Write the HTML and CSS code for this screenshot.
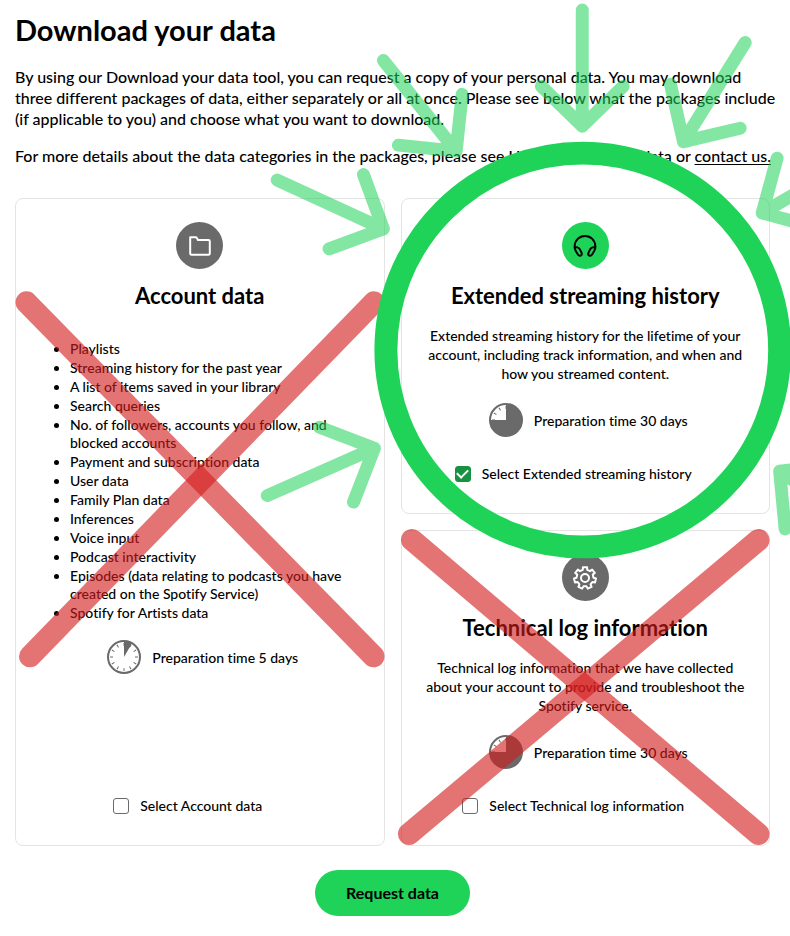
FILE: index.html
```html
<!DOCTYPE html>
<html lang="en">
<head>
<meta charset="utf-8">
<meta name="viewport" content="width=device-width, initial-scale=1">
<title>Download your data</title>
<link rel="stylesheet" href="styles.css">
</head>
<body>
<main class="page">
  <h1 class="page-title">Download your data</h1>
  <p class="intro">By using our Download your data tool, you can request a copy of your personal data. You may download<br>three different packages of data, either separately or all at once. Please see below what the packages include<br>(if applicable to you) and choose what you want to download.</p>
  <p class="intro">For more details about the data categories in the packages, please see <a class="help-link" href="#">Understanding my data</a> or <a href="#">contact us.</a></p>

  <form class="request">
    <div class="packages">
      <section class="card card-account">
        <span class="badge">
          <svg class="badge-icon" viewBox="0 0 24 24" aria-hidden="true"><path d="M2.2 3.2h5.4q1 0 1.4.9l.9 1.9h10.6q1.3 0 1.3 1.3v12.2q0 1.3-1.3 1.3H3.5q-1.3 0-1.3-1.3z"/></svg>
        </span>
        <h2 class="card-title">Account data</h2>
        <ul class="contents">
          <li>Playlists</li>
          <li>Streaming history for the past year</li>
          <li>A list of items saved in your library</li>
          <li>Search queries</li>
          <li>No. of followers, accounts you follow, and<br>blocked accounts</li>
          <li>Payment and subscription data</li>
          <li>User data</li>
          <li>Family Plan data</li>
          <li>Inferences</li>
          <li>Voice input</li>
          <li>Podcast interactivity</li>
          <li>Episodes (data relating to podcasts you have<br>created on the Spotify Service)</li>
          <li>Spotify for Artists data</li>
        </ul>
        <div class="prep">
          <svg class="clock" viewBox="0 0 34 34" aria-hidden="true">
            <circle class="clock-rim" cx="17" cy="17" r="16"/>
            <circle class="clock-ticks" cx="17" cy="17" r="12.5" pathLength="120"/>
            <path class="clock-fill" d="M17 17V1a16 16 0 0 1 8 2.14z"/>
          </svg>
          <span>Preparation time 5 days</span>
        </div>
        <label class="choice"><input type="checkbox" name="account"><span>Select Account data</span></label>
        <svg class="cross" viewBox="0 0 369 649" preserveAspectRatio="none" aria-hidden="true">
          <path d="M11.5 104.500 358 459"/>
          <path d="M358.500 104.500 15 459"/>
        </svg>
      </section>

      <section class="card card-extended">
        <span class="badge badge-green">
          <svg class="badge-icon" viewBox="0 0 24 24" aria-hidden="true"><path d="M1.700 14.500v-2.300a10.300 10.300 0 0 1 20.600 0v2.300"/><path d="M1.900 13.600q3.300-1.100 4.900 1.700l1.700 3.300q.9 2.300-.8 3-1.600.7-2.800-1.100L2.800 17q-1-1.600-.9-3.400z"/><path d="M22.100 13.600q-3.300-1.100-4.900 1.700l-1.700 3.300q-.9 2.300.8 3 1.600.7 2.800-1.100l2.100-3.500q1-1.600.9-3.400z"/></svg>
        </span>
        <h2 class="card-title">Extended streaming history</h2>
        <p class="summary">Extended streaming history for the lifetime of your<br>account, including track information, and when and<br>how you streamed content.</p>
        <div class="prep">
          <svg class="clock" viewBox="0 0 34 34" aria-hidden="true">
            <circle class="clock-rim" cx="17" cy="17" r="16"/>
            <circle class="clock-ticks" cx="17" cy="17" r="12.5" pathLength="120"/>
            <path class="clock-fill" d="M17 17V1a16 16 0 1 1-16 16z"/>
          </svg>
          <span>Preparation time 30 days</span>
        </div>
        <label class="choice"><input type="checkbox" name="extended" checked><span>Select Extended streaming history</span></label>
        <svg class="highlight" viewBox="0 0 370 317" aria-hidden="true">
          <circle class="ring" cx="182" cy="152.500" r="197.500"/>
          <path class="arrow" d="M181.500-188.500V-72M140.500-112l41 40 41-40"/>
          <path class="arrow" d="M-18-138 55-47M-3-53l58 6 6-57"/>
          <path class="arrow" d="M345-156 283-56.500M270-114l13 57.500 57-13.500"/>
          <path class="arrow" d="M-124.500-18-18 31M-38-23.500-18 31-72.500 51"/>
          <path class="arrow" d="M462-43 362 15M377-40 362 15 417 30"/>
          <path class="arrow" d="M-134.500 298.500-27 251M-82 230l55 21-21 54"/>
          <path class="arrow" d="M464 332 379.500 274M385 332 379.500 274 436 268"/>
        </svg>
      </section>

      <section class="card card-technical">
        <span class="badge">
          <svg class="badge-icon" viewBox="0 0 24 24" aria-hidden="true"><circle cx="12" cy="12" r="4"/><path d="M9.900 1.200h4.200l.1 2.600 2.850 1.360 2.080-1.530 2.620 3.280-1.960 1.690.7 3.080 2.500.68-.93 4.090-2.550-.48-1.970 2.470 1.040 2.380-3.790 1.820-1.210-2.290h-3.160l-1.210 2.290-3.790-1.820 1.040-2.380-1.970-2.470-2.550.48-.93-4.090 2.500-.68.7-3.080-1.960-1.690 2.620-3.280 2.080 1.530L9.800 3.800z"/></svg>
        </span>
        <h2 class="card-title">Technical log information</h2>
        <p class="summary">Technical log information that we have collected<br>about your account to provide and troubleshoot the<br>Spotify service.</p>
        <div class="prep">
          <svg class="clock" viewBox="0 0 34 34" aria-hidden="true">
            <circle class="clock-rim" cx="17" cy="17" r="16"/>
            <circle class="clock-ticks" cx="17" cy="17" r="12.5" pathLength="120"/>
            <path class="clock-fill" d="M17 17V1a16 16 0 1 1-16 16z"/>
          </svg>
          <span>Preparation time 30 days</span>
        </div>
        <label class="choice"><input type="checkbox" name="technical"><span>Select Technical log information</span></label>
        <svg class="cross" viewBox="0 0 370 317" preserveAspectRatio="none" aria-hidden="true">
          <path d="M11 10 358 305"/>
          <path d="M358 10 8 305"/>
        </svg>
      </section>
    </div>
    <button class="submit" type="button">Request data</button>
  </form>
</main>
</body>
</html>
```
FILE: styles.css
```css
* {
  box-sizing: border-box;
}

body {
  margin: 0;
  background: #fff;
  color: #000;
  font-family: Lato, "Liberation Sans", sans-serif;
  font-size: 14px;
  font-weight: 500;
  font-variant-ligatures: none;
  line-height: 19px;
}

.page {
  padding: 12px 20px 20px 15px;
  overflow: hidden;
}

.page-title {
  margin: 0 0 18px;
  font-size: 29px;
  font-weight: 700;
  line-height: 36px;
}

.intro {
  margin: 0 0 16px;
  font-size: 16px;
  line-height: 21px;
  white-space: nowrap;
}

.intro a {
  color: inherit;
  text-underline-offset: 2px;
}

.intro .help-link {
  text-decoration: none;
}

.packages {
  display: grid;
  grid-template-columns: 1fr 1fr;
  grid-template-rows: 1fr 1fr;
  gap: 16px;
  margin-top: 32px;
}

.card {
  position: relative;
  display: flex;
  flex-direction: column;
  align-items: center;
  min-height: 316px;
  padding: 23px 20px 30px;
  border: 1px solid #e4e4e4;
  border-radius: 8px;
}

.card-account {
  grid-row: span 2;
}

.badge {
  display: flex;
  align-items: center;
  justify-content: center;
  width: 47px;
  height: 47px;
  border-radius: 50%;
  background: #6a6a6a;
  color: #fff;
}

.badge-green {
  background: #1ed358;
  color: #000;
}

.badge-icon {
  width: 24px;
  height: 24px;
  fill: none;
  stroke: currentColor;
  stroke-width: 2;
  stroke-linejoin: round;
}

.card-title {
  margin: 13px 0 16px;
  font-size: 22px;
  font-weight: 700;
  line-height: 28px;
}

.summary {
  margin: 0;
  text-align: center;
  white-space: nowrap;
}

.contents {
  display: flex;
  flex-direction: column;
  gap: 1px;
  align-self: stretch;
  margin: 14px 0 0;
  padding-left: 34px;
  line-height: 18px;
  white-space: nowrap;
}

.prep {
  display: flex;
  align-items: center;
  gap: 11px;
  margin-top: 20px;
  padding-left: 6px;
}

.card-account .prep {
  margin-top: 18px;
}

.clock {
  width: 34px;
  height: 34px;
  fill: none;
}

.clock-rim {
  stroke: #6a6a6a;
  stroke-width: 2;
}

.clock-ticks {
  stroke: #6a6a6a;
  stroke-width: 3;
  stroke-dasharray: 1.500 8.500;
  stroke-dashoffset: 0.750;
}

.clock-fill {
  fill: #6a6a6a;
}

.choice {
  display: flex;
  align-items: center;
  gap: 11px;
  margin-top: auto;
  padding-right: 24px;
}

.choice input {
  appearance: none;
  display: grid;
  place-items: center;
  width: 16px;
  height: 16px;
  margin: 0;
  border: 1px solid #6a6a6a;
  border-radius: 3px;
  background: #fff;
}

.choice input:checked {
  border-color: #169240;
  background: #169240;
}

.choice input:checked::before {
  content: "";
  width: 9px;
  height: 5px;
  border: solid #fff;
  border-width: 0 0 2px 2px;
  transform: translateY(-1px) rotate(-45deg);
}

.cross,
.highlight {
  position: absolute;
  z-index: 1;
  top: -1px;
  left: -1px;
  width: calc(100% + 2px);
  height: calc(100% + 2px);
  overflow: visible;
  fill: none;
  stroke-linecap: round;
  stroke-linejoin: round;
  pointer-events: none;
}

.cross path {
  stroke: #d31b1b;
  stroke-width: 22px;
  stroke-opacity: 0.610;
  vector-effect: non-scaling-stroke;
}

.highlight {
  z-index: 2;
}

.ring {
  stroke: #1ed358;
  stroke-width: 23px;
}

.arrow {
  stroke: #1ed358;
  stroke-width: 13px;
  opacity: 0.550;
}

.submit {
  display: block;
  margin: 24px auto 0;
  padding: 12px 31px;
  border: 0;
  border-radius: 23px;
  background: #1ed358;
  color: #000;
  font-family: inherit;
  font-size: 16px;
  font-weight: 700;
  line-height: 22px;
}
```
